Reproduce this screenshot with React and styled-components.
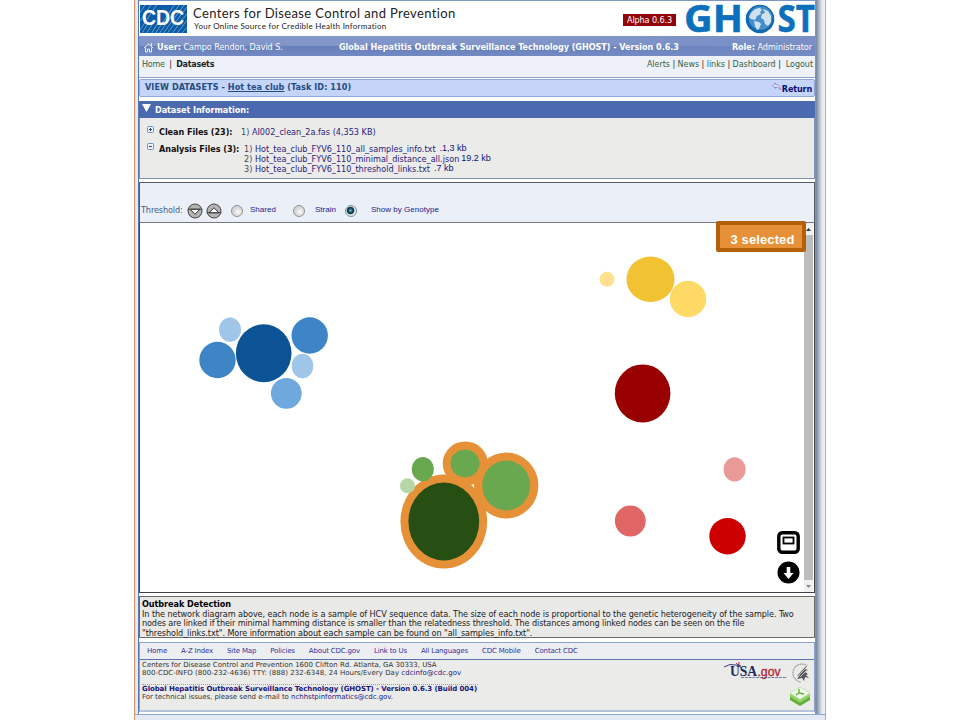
import React from 'react';
import styled, { createGlobalStyle } from 'styled-components';

const Global = createGlobalStyle`
  * { box-sizing: border-box; }
  body {
    margin: 0;
    background: #fff;
    overflow: hidden;
    font: 9px/10px "DejaVu Sans Condensed", "DejaVu Sans", sans-serif;
    letter-spacing: -0.05px;
  }
`;

const Frame = styled.div`
  width: 692px;
  height: 720px;
  margin-left: 134px;
  display: flex;
  flex-direction: column;
  background: #e3eaf4;
  border-left: 1px solid #d69468;
  border-right: 1px solid #e5a069;
`;

const Sheet = styled.div`
  display: flex;
  height: 715px;
  border-bottom: 1px solid #8ea6cd;
`;

const LeftRail = styled.div`
  width: 4px;
  border-right: 1px solid #5677ae;
  background: linear-gradient(90deg, #f3d9c4 1px, #e3ebf6 1px);
`;

const RightRail = styled.div`
  width: 10px;
  border-left: 1px solid #7c95ba;
  background: linear-gradient(90deg, #74879f, #a9b6c8 3px, #e2e8ef 6px, #f6f3ec 9px);
`;

const Content = styled.main`
  width: 676px;
  display: flex;
  flex-direction: column;
  background: #fff;
  border-top: 1px solid #7d98c8;
`;

const Header = styled.header`
  height: 35px;
  display: flex;
  align-items: flex-start;
  padding-top: 4px;
`;

const CdcMark = styled.svg`
  width: 47px;
  height: 28px;
  margin-left: 1px;
  flex: none;
`;

const Agency = styled.div`
  flex: 1;
  padding-left: 6px;
  color: #222;
  white-space: nowrap;
`;

const AgencyName = styled.div`
  font: 400 13px/16px Lato, sans-serif;
  letter-spacing: 0.37px;
`;

const AgencyTagline = styled.div`
  font: 8px/10px Lato, sans-serif;
  letter-spacing: 0.27px;
  padding-left: 1px;
`;

const VersionTag = styled.div`
  width: 53px;
  height: 12px;
  margin: 9px 9px 0 0;
  line-height: 13px;
  text-align: center;
  letter-spacing: -0.1px;
  color: #fff;
  background: #8f0509;
`;

const GhostMark = styled.svg`
  width: 130px;
  height: 31px;
  flex: none;
  overflow: visible;
`;

const UserBar = styled.div`
  height: 20px;
  display: grid;
  grid-template-columns: 196px 1fr 130px;
  align-items: center;
  padding: 2px 3px 0 4px;
  color: #fff;
  white-space: nowrap;
  background: linear-gradient(90deg, transparent 50%, #748bc4aa), linear-gradient(#8499cb, #8094c8 50%, #6780bc 52%, #7389c2);
`;

const UserName = styled.div`
  display: flex;
  align-items: center;
  gap: 3px;
`;

const HomeIcon = styled.svg`
  width: 11px;
  height: 11px;
`;

const AppTitle = styled.b`
  letter-spacing: -0.04px;
`;

const Role = styled.div`
  text-align: right;
`;

const NavBar = styled.nav`
  height: 22px;
  display: flex;
  justify-content: space-between;
  padding: 4px 2px 0 3px;
  font: 8px/10px "DejaVu Sans", sans-serif;
  letter-spacing: -0.037px;
  white-space: pre;
  color: #222;
  background: #eef1f8;
  border-bottom: 1px solid #8fa3cd;
`;

const Crumbs = styled.div`
  letter-spacing: -0.26px;
`;

const NavLink = styled.span`
  color: #35633c;
`;

const TitleBar = styled.div`
  height: 18px;
  margin-top: 1px;
  display: flex;
  align-items: center;
  justify-content: space-between;
  padding: 0 2px 2px 5px;
  font-weight: bold;
  letter-spacing: 0.07px;
  white-space: pre;
  color: #244b82;
  background: #c5d5f9;
  border: 1px solid #92a8d6;
  border-radius: 2px;
`;

const TaskLink = styled.span`
  text-decoration: underline;
`;

const ReturnLink = styled.div`
  display: flex;
  align-items: center;
  color: #0c0c74;
  letter-spacing: -0.16px;
  line-height: 10px;
  padding-top: 3px;
`;

const ReturnIcon = styled.svg`
  width: 11px;
  height: 9px;
  margin-bottom: 4px;
`;

const SectionHeader = styled.div`
  height: 17px;
  margin-top: 4px;
  display: flex;
  align-items: center;
  gap: 4px;
  padding-left: 3px;
  color: #fff;
  font-weight: bold;
  letter-spacing: -0.07px;
  background: #4a69ae;
`;

const Caret = styled.svg`
  width: 9px;
  height: 8px;
  margin-bottom: 3px;
`;

const FilePanel = styled.section`
  height: 61px;
  padding: 8px 0 0 7px;
  background: #ebebe9;
  border: 1px solid #7e8eae;
  border-top: 0;
`;

const FileGroup = styled.div`
  display: grid;
  grid-template-columns: 12px ${p => p.$labelWidth}px 1fr;
  margin-bottom: 6px;
  color: #111;
  white-space: pre;
`;

const Toggle = styled.svg`
  width: 7px;
  height: 7px;
`;

const FileLabel = styled.b`
  padding-top: 1px;
`;

const FileList = styled.div`
  padding-top: 1px;
  letter-spacing: 0.01px;
  color: #3e4b5e;
`;

const FileLine = styled.div`
  display: flex;
  height: 10px;
`;

const FileName = styled.span`
  color: #29217c;
`;

const FileSize = styled.span`
  padding-left: ${p => p.$gap}px;
  font: 9px/9px "Liberation Sans", sans-serif;
  letter-spacing: 0;
  color: #10107c;
`;

const ThresholdBar = styled.section`
  height: 40px;
  margin-top: 3px;
  display: flex;
  align-items: center;
  padding: 17px 0 0 1px;
  background: #ebeff8;
  border: 1px solid #555a63;
  border-bottom: 0;
  font: 8px/10px "Liberation Sans", sans-serif;
  letter-spacing: 0.02px;
  color: #1b1b8c;
`;

const ThresholdLabel = styled.span`
  width: 46px;
  margin-top: -2px;
  font: 9px/10px "DejaVu Sans Condensed", "DejaVu Sans", sans-serif;
  letter-spacing: -0.1px;
  color: #3d5f86;
`;

const StepButton = styled.svg`
  width: 16px;
  height: 16px;
  margin-right: 3px;
`;

const Options = styled.div`
  display: flex;
  margin: -2px 0 0 6px;
`;

const Option = styled.label`
  width: ${p => p.$width}px;
  display: grid;
  grid-template-columns: ${p => p.$indent}px 1fr;
  align-items: center;
  white-space: nowrap;
`;

const Radio = styled.span`
  width: 12px;
  height: 12px;
  margin-top: 2px;
  border-radius: 50%;
  border: 1px solid ${p => (p.$on ? '#7f929c' : '#929292')};
  background: ${p => (p.$on
    ? 'radial-gradient(circle at 45% 45%, #7fc5d8 0, #17506b 2px, #103648 3.4px, #dfe8ec 4.2px)'
    : 'radial-gradient(circle at 60% 60%, #fafafa 0, #e4e4e4 3px, #d4d4d4 5px)')};
`;

const Canvas = styled.section`
  position: relative;
  height: 371px;
  display: flex;
  background: #fff;
  border: 1px solid #3f4248;
  border-top-color: #77797e;
`;

const Network = styled.svg`
  width: 664px;
  height: 369px;
  flex: none;
`;

const ScrollTrack = styled.div`
  width: 9px;
  display: flex;
  flex-direction: column;
  align-items: center;
  justify-content: space-between;
  background: #f1f1f1;
`;

const ScrollArrow = styled.svg`
  width: 9px;
  height: 12px;
`;

const ScrollThumb = styled.div`
  flex: 1;
  width: 9px;
  background: #bdbdbd;
`;

const SelectedBadge = styled.div`
  position: absolute;
  top: -2px;
  left: 576px;
  width: 90px;
  height: 31px;
  border: 4px solid #b45f0c;
  border-radius: 2px;
  background: #e69138;
  color: #fff;
  font: bold 13px/29px "Liberation Sans", sans-serif;
  letter-spacing: 0.1px;
  text-align: center;
  padding-left: 3px;
  white-space: nowrap;
`;

const CanvasTools = styled.div`
  position: absolute;
  left: 637px;
  top: 308px;
  display: flex;
  flex-direction: column;
  gap: 7px;
`;

const ToolIcon = styled.svg`
  width: 23px;
  height: 23px;
`;

const Description = styled.section`
  height: 42px;
  margin-top: 3px;
  padding: 3px 0 0 2px;
  line-height: 9.6px;
  background: #e9e9e7;
  border: 1px solid #6b6b69;
  color: #1c1c1c;
  white-space: nowrap;
`;

const DescriptionTitle = styled.b`
  display: block;
  color: #000;
  letter-spacing: -0.05px;
`;

const DescriptionLine = styled.div`
  letter-spacing: ${p => p.$track}px;
`;

const Footer = styled.footer`
  height: 70px;
  margin-top: 4px;
  background: #ebebe9;
  border: 1px solid #8ea1c8;
  border-bottom: 2px solid #b5c3dd;
  font: 7px/9px "DejaVu Sans", sans-serif;
  letter-spacing: -0.04px;
  color: #333;
  white-space: nowrap;
`;

const FooterNav = styled.nav`
  height: 17px;
  display: flex;
  gap: 14px;
  padding: 4px 0 0 7px;
  letter-spacing: -0.16px;
  color: #32329a;
  background: #eceef1;
  border-bottom: 1px solid #5c74ac;
`;

const FooterBody = styled.div`
  display: flex;
  justify-content: space-between;
  padding: 1px 3px 0 2px;
`;

const Contact = styled.div`
  line-height: 8.4px;
`;

const AddressLines = styled.div`
  width: 336px;
  height: 24px;
  border-bottom: 1px dotted #9aa0b4;
`;

const AddressLine = styled.div`
  letter-spacing: ${p => p.$track}px;
`;

const BuildLine = styled.b`
  display: block;
  color: #14147c;
  letter-spacing: -0.089px;
`;

const MailLink = styled.span`
  color: #22227e;
`;

const Seals = styled.div`
  display: grid;
  grid-template-columns: 66px 22px;
  grid-template-rows: 24px 24px;
  justify-items: center;
`;

const UsaGov = styled.svg`
  width: 66px;
  height: 22px;
`;

const Seal = styled.svg`
  width: 22px;
  height: 23px;
`;

const AppBadge = styled.svg`
  grid-column: 2;
  width: 22px;
  height: 24px;
`;

const nodes = [
  [230, 329.7, 11, 12.2, '#9fc5e8'],
  [217.5, 360, 18.2, 18.2, '#3d85c6'],
  [309.7, 335.5, 18.2, 18.2, '#3d85c6'],
  [302.5, 366, 10.8, 12.2, '#9fc5e8'],
  [286.3, 393.3, 15.4, 15.4, '#6fa8dc'],
  [263.7, 353.3, 27.8, 29, '#0b5394'],
  [607, 279.3, 7.5, 7.5, '#ffe08f'],
  [650.5, 279.2, 24, 22.8, '#f1c232'],
  [688, 299, 18.2, 18.2, '#ffd966'],
  [642.6, 393.4, 27.8, 29, '#990000'],
  [734.6, 469.4, 11, 12.2, '#ea9999'],
  [630.3, 521, 15.4, 15.4, '#e06666'],
  [727.5, 536.2, 18.2, 18.2, '#cc0000'],
];

const halos = [
  [443.8, 521.5, 43.4, 47],
  [465.3, 463.6, 22.6, 22.2],
  [506.2, 485.5, 32.2, 33],
];

const selected = [
  [443.8, 521.5, 35.4, 39, '#274e13'],
  [465, 463.4, 14.5, 14, '#6aa84f'],
  [506.2, 485.5, 24, 25, '#6aa84f'],
  [422.8, 469.2, 11, 12.2, '#6aa84f'],
  [407.5, 485.7, 7.5, 7.5, '#b6d7a8'],
];

const footerLinks = [
  'Home', 'A-Z Index', 'Site Map', 'Policies', 'About CDC.gov',
  'Link to Us', 'All Languages', 'CDC Mobile', 'Contact CDC',
];

const Node = ([cx, cy, rx, ry, fill], i) => (
  <ellipse key={i} cx={cx} cy={cy} rx={rx} ry={ry} fill={fill || '#e69138'} />
);

const CdcLogo = () => (
  <CdcMark viewBox="0 0 48 29" preserveAspectRatio="none">
    <rect width="48" height="29" fill="#0b5ba5" />
    <g stroke="#8fbbe0" strokeWidth=".7" fill="none">
      <path d="M0 8L5 0M0 17L11 0M0 26L17 0M2 29L9 18M7 29L13 19M12 29L20 16M16 29L35 0M20 29L40 0M24 29L45 0M28 29L48 2M33 29L48 9M38 29L48 16M43 29L48 23" />
    </g>
    <text x="2" y="20.5" textLength="43" lengthAdjust="spacingAndGlyphs" fontFamily="Liberation Sans, sans-serif" fontWeight="bold" fontSize="22" fill="#fff">CDC</text>
  </CdcMark>
);

const GhostLogo = () => (
  <GhostMark viewBox="0 0 130 31">
    <g fontFamily="Open Sans, sans-serif" fontWeight="700" fontSize="37" fill="#0d70bd" stroke="#0d70bd" strokeWidth=".5">
      <text x="-1" y="27" textLength="59" lengthAdjust="spacingAndGlyphs">GH</text>
      <text x="92.5" y="27" textLength="37.5" lengthAdjust="spacingAndGlyphs">ST</text>
    </g>
    <circle cx="75" cy="14" r="14.3" fill="#1267ae" />
    <circle cx="75.5" cy="13" r="11.8" fill="#4590cc" />
    <path d="M66 8q4-5 9-5l2 2-2 2 1 2-4 2-2 4-4-1-2-2zM69 16l5 1 2 2-2 5-2 1-2-4zM78 4l5 2 3 5v6l-3 4-3-2-1-4-3-2 1-4 3-1z" fill="#cfe0ee" />
  </GhostMark>
);

const Stepper = ({ up }) => (
  <StepButton viewBox="0 0 16 16">
    <circle cx="8" cy="8" r="7" fill="#b4b4b4" stroke="#333" strokeWidth=".9" />
    <g transform={up ? 'rotate(180 8 8)' : undefined}>
      <path d="M.8 6.2h14.4" stroke="#333" strokeWidth=".9" />
      <path d="M3.3 6.3h9.4L8 11.3z" fill="#fff" stroke="#222" strokeWidth=".9" />
    </g>
  </StepButton>
);

const FoldToggle = ({ open }) => (
  <Toggle viewBox="0 0 7 7">
    <rect x=".5" y=".5" width="6" height="6" rx="1" fill="#eef3ff" stroke="#6d8ccc" />
    <path d={open ? 'M2 3.5h3' : 'M2 3.5h3M3.5 2v3'} stroke="#27489c" />
  </Toggle>
);

export default function App() {
  return (
    <>
      <Global />
      <Frame>
        <Sheet>
          <LeftRail />
          <Content>
            <Header>
              <CdcLogo />
              <Agency>
                <AgencyName>Centers for Disease Control and Prevention</AgencyName>
                <AgencyTagline>Your Online Source for Credible Health Information</AgencyTagline>
              </Agency>
              <VersionTag>Alpha 0.6.3</VersionTag>
              <GhostLogo />
            </Header>
            <UserBar>
              <UserName>
                <HomeIcon viewBox="0 0 11 11">
                  <path d="M1 6l4.5-4L10 6M2.5 5.5V10h2V7h2v3h2V5.5M8.500 1v3" fill="none" stroke="#e8eefc" strokeWidth="1" />
                </HomeIcon>
                <span><b>User:</b> Campo Rendon, David S.</span>
              </UserName>
              <AppTitle>Global Hepatitis Outbreak Surveillance Technology (GHOST) - Version 0.6.3</AppTitle>
              <Role><b>Role:</b> Administrator</Role>
            </UserBar>
            <NavBar>
              <Crumbs><NavLink>Home</NavLink>  |  <b>Datasets</b></Crumbs>
              <div>
                <NavLink>Alerts</NavLink> | <NavLink>News</NavLink> | <NavLink>links</NavLink> | <NavLink>Dashboard</NavLink> |  <NavLink>Logout</NavLink>
              </div>
            </NavBar>
            <TitleBar>
              <div>VIEW DATASETS - <TaskLink>Hot tea club</TaskLink> (Task ID: 110)</div>
              <ReturnLink>
                <ReturnIcon viewBox="0 0 10 9">
                  <path d="M1 3.5L4 1v1.5q5 0 5 5.5Q7.5 5 4 5v1.5z" fill="#dfe2fb" stroke="#8685c8" strokeWidth=".8" />
                </ReturnIcon>
                Return
              </ReturnLink>
            </TitleBar>
            <SectionHeader>
              <Caret viewBox="0 0 9 8"><path d="M0 0h9L4.5 8z" fill="#fff" /></Caret>
              Dataset Information:
            </SectionHeader>
            <FilePanel>
              <FileGroup $labelWidth={82}>
                <FoldToggle />
                <FileLabel>Clean Files (23):</FileLabel>
                <FileList>1) <FileName>AI002_clean_2a.fas (4,353 KB)</FileName></FileList>
              </FileGroup>
              <FileGroup $labelWidth={85}>
                <FoldToggle open />
                <FileLabel>Analysis Files (3):</FileLabel>
                <FileList>
                  <FileLine>1) <FileName>Hot_tea_club_FYV6_110_all_samples_info.txt</FileName><FileSize $gap={4}>.1,3 kb</FileSize></FileLine>
                  <FileLine>2) <FileName>Hot_tea_club_FYV6_110_minimal_distance_all.json</FileName><FileSize $gap={2}>19.2 kb</FileSize></FileLine>
                  <FileLine>3) <FileName>Hot_tea_club_FYV6_110_threshold_links.txt</FileName><FileSize $gap={4}>.7 kb</FileSize></FileLine>
                </FileList>
              </FileGroup>
            </FilePanel>
            <ThresholdBar>
              <ThresholdLabel>Threshold:</ThresholdLabel>
              <Stepper />
              <Stepper up />
              <Options>
                <Option $width={62} $indent={19}><Radio />Shared</Option>
                <Option $width={52} $indent={22}><Radio />Strain</Option>
                <Option $width={100} $indent={26}><Radio $on />Show by Genotype</Option>
              </Options>
            </ThresholdBar>
            <Canvas>
              <Network viewBox="140 223 664 369">
                {nodes.map(Node)}
                {halos.map(Node)}
                {selected.map(Node)}
              </Network>
              <ScrollTrack>
                <ScrollArrow viewBox="0 0 9 12"><path d="M2 8l2.5-3L7 8z" fill="#333" /></ScrollArrow>
                <ScrollThumb />
                <ScrollArrow viewBox="0 0 9 12"><path d="M2 5l2.5 3L7 5z" fill="#888" /></ScrollArrow>
              </ScrollTrack>
              <SelectedBadge>3 selected</SelectedBadge>
              <CanvasTools>
                <ToolIcon viewBox="0 0 23 23">
                  <rect x="1.8" y="1.8" width="19.4" height="19.4" rx="3.5" fill="#fff" stroke="#000" strokeWidth="3.4" />
                  <rect x="6.5" y="6.5" width="10" height="6" fill="#fff" stroke="#000" strokeWidth="1.8" />
                </ToolIcon>
                <ToolIcon viewBox="0 0 23 23">
                  <circle cx="11.5" cy="11.5" r="11" />
                  <path d="M9.7 6h3.6v6h3.2l-5 6-5-6h3.2z" fill="#fff" />
                </ToolIcon>
              </CanvasTools>
            </Canvas>
            <Description>
              <DescriptionTitle>Outbreak Detection</DescriptionTitle>
              <DescriptionLine $track={-0.07}>In the network diagram above, each node is a sample of HCV sequence data. The size of each node is proportional to the genetic heterogeneity of the sample. Two</DescriptionLine>
              <DescriptionLine $track={-0.107}>nodes are linked if their minimal hamming distance is smaller than the relatedness threshold. The distances among linked nodes can be seen on the file</DescriptionLine>
              <DescriptionLine $track={-0.07}>"threshold_links.txt". More information about each sample can be found on "all_samples_info.txt".</DescriptionLine>
            </Description>
            <Footer>
              <FooterNav>
                {footerLinks.map(t => <span key={t}>{t}</span>)}
              </FooterNav>
              <FooterBody>
                <Contact>
                  <AddressLines>
                    <AddressLine $track={-0.01}>Centers for Disease Control and Prevention 1600 Clifton Rd. Atlanta, GA 30333, USA</AddressLine>
                    <AddressLine $track={0.025}>800-CDC-INFO (800-232-4636) TTY: (888) 232-6348, 24 Hours/Every Day <MailLink>cdcinfo@cdc.gov</MailLink></AddressLine>
                  </AddressLines>
                  <BuildLine>Global Hepatitis Outbreak Surveillance Technology (GHOST) - Version 0.6.3 (Build 004)</BuildLine>
                  For technical issues, please send e-mail to <MailLink>nchhstpinformatics@cdc.gov.</MailLink>
                </Contact>
                <Seals>
                  <UsaGov viewBox="0 0 66 22">
                    <path d="M1 6q6-4 12-2l5 1M15 3l3 4" stroke="#36417c" fill="none" />
                    <path d="M13 2l2 2M16 1v3" stroke="#b92435" />
                    <text x="7" y="15" textLength="27" lengthAdjust="spacingAndGlyphs" fontFamily="Liberation Serif, serif" fontWeight="bold" fontSize="15" fill="#1c2860">USA</text>
                    <text x="34.5" y="15" textLength="23" lengthAdjust="spacingAndGlyphs" fontFamily="Liberation Sans, sans-serif" fontSize="12" fill="#b51f36" stroke="#b51f36" strokeWidth=".3">.gov</text>
                    <path d="M18 16.5h46" stroke="#555b84" strokeWidth=".8" strokeDasharray="3 .8" />
                  </UsaGov>
                  <Seal viewBox="0 0 22 23">
                    <path d="M17 4A9 9 0 1 0 12 21" fill="none" stroke="#999" strokeWidth="1.2" strokeDasharray="1.2 .5" />
                    <path d="M19 3L8 15l3-1-3 4 5-1 2 3 1-4 4 1-3-3 2-1-3-2 3-2-3-1z" fill="#555" />
                    <path d="M18 6l-8 8M19 8l-8 8" stroke="#ddd" strokeWidth=".8" />
                  </Seal>
                  <AppBadge viewBox="0 0 22 24">
                    <path d="M1 9v6l10 6 10-6V9l-10 6z" fill="#5fac38" />
                    <path d="M1 9v3l10 6 10-6V9l-10 6z" fill="#8fd05f" />
                    <path d="M11 2l10 6-10 6L1 8z" fill="#eefae8" stroke="#b9e2a0" strokeWidth=".8" />
                    <path d="M10 4v4l5 1M10 8l-3 2" stroke="#58ad36" strokeWidth="1.3" fill="none" />
                  </AppBadge>
                </Seals>
              </FooterBody>
            </Footer>
          </Content>
          <RightRail />
        </Sheet>
      </Frame>
    </>
  );
}
